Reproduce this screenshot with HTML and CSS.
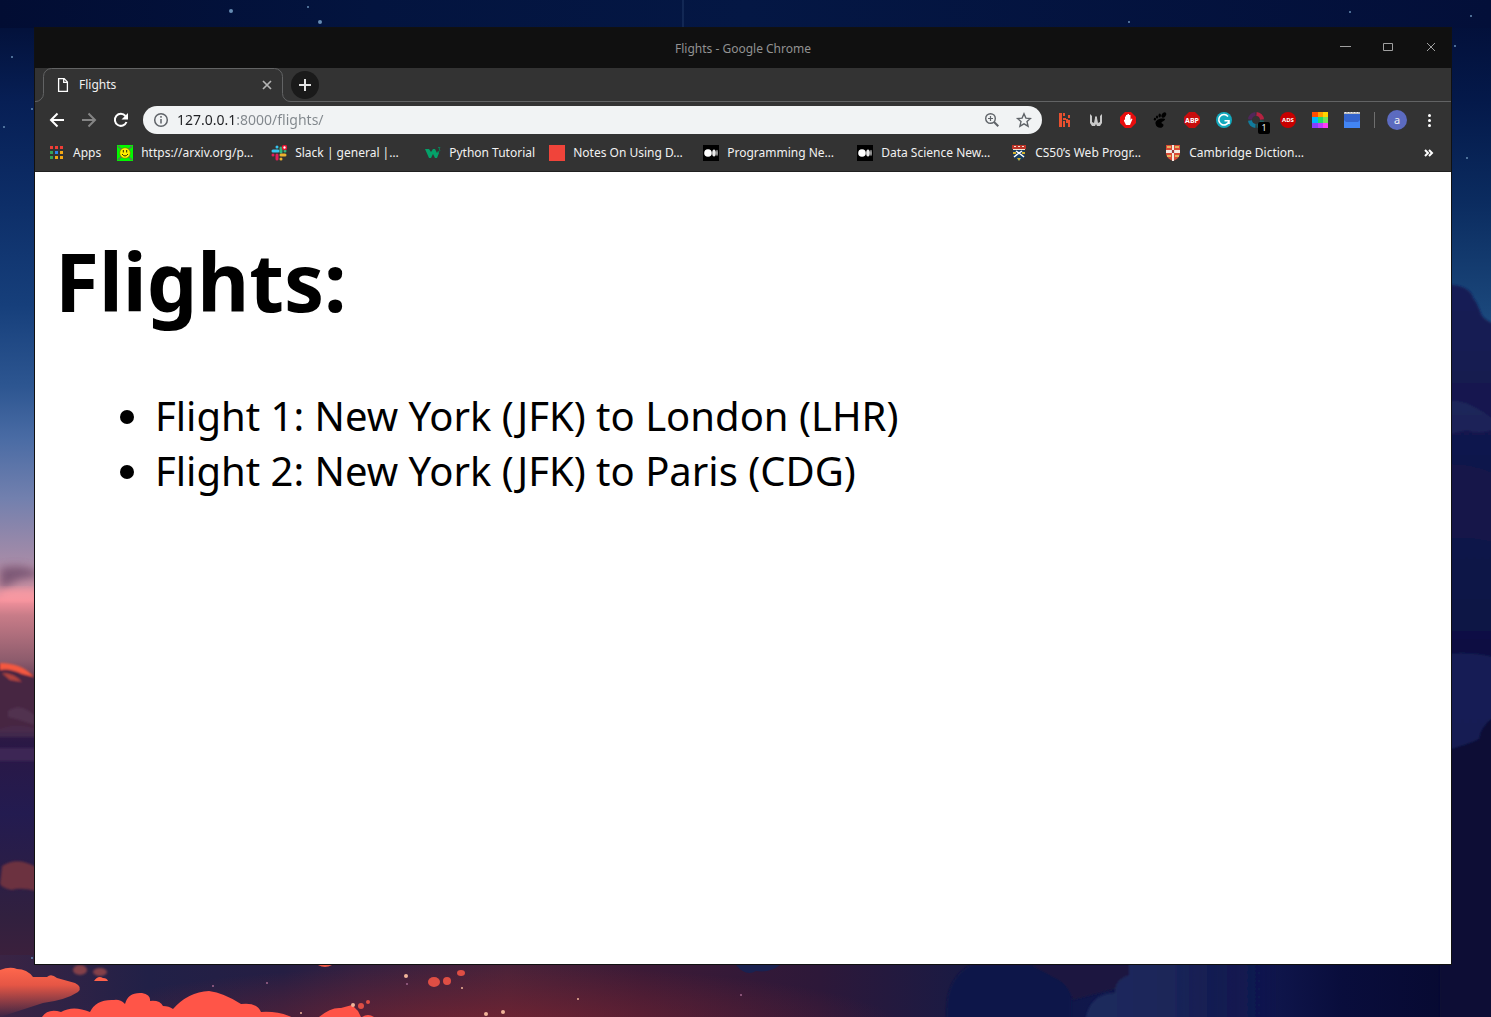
FILE: index.html
```
<!DOCTYPE html>
<html lang="en">
<head>
<meta charset="utf-8">
<title>Flights</title>
<link rel="stylesheet" href="styles.css">
</head>
<body>
<svg class="wallpaper" viewBox="0 0 1491 1017" preserveAspectRatio="none" aria-hidden="true">
  <defs>
    <linearGradient id="sky" x1="0" y1="0" x2="0" y2="1">
      <stop offset="0" stop-color="#020b30"/><stop offset=".03" stop-color="#03123c"/><stop offset=".1" stop-color="#071f55"/>
      <stop offset=".2" stop-color="#0d2e68"/><stop offset=".3" stop-color="#163f7b"/><stop offset=".38" stop-color="#2d5691"/>
      <stop offset=".43" stop-color="#496ba4"/><stop offset=".49" stop-color="#7280ae"/><stop offset=".55" stop-color="#a48ba8"/>
      <stop offset=".575" stop-color="#c58fa2"/><stop offset=".59" stop-color="#f5929d"/><stop offset=".605" stop-color="#c87c88"/><stop offset=".65" stop-color="#8c5b6c"/>
      <stop offset=".68" stop-color="#4d2b4a"/><stop offset=".73" stop-color="#2a1845"/><stop offset=".8" stop-color="#231b50"/>
      <stop offset=".9" stop-color="#31203f"/><stop offset="1" stop-color="#4a2038"/>
    </linearGradient>
    <linearGradient id="east" x1="0" y1="0" x2="0" y2="1">
      <stop offset="0" stop-color="#020d35"/><stop offset=".1" stop-color="#04194a"/><stop offset=".2" stop-color="#0b2c60"/>
      <stop offset=".32" stop-color="#1c4a7e"/><stop offset="1" stop-color="#07082e"/>
    </linearGradient>
    <linearGradient id="top" x1="0" y1="0" x2="1" y2="0">
      <stop offset="0" stop-color="#020d33"/><stop offset=".25" stop-color="#03143f"/><stop offset=".5" stop-color="#041744"/><stop offset="1" stop-color="#030f39"/>
    </linearGradient>
    <linearGradient id="ground" x1="0" y1="0" x2="1" y2="0">
      <stop offset="0" stop-color="#3a2444"/><stop offset=".1" stop-color="#212047"/><stop offset=".19" stop-color="#251e43"/><stop offset=".24" stop-color="#352040"/>
      <stop offset=".34" stop-color="#4a2239"/><stop offset=".43" stop-color="#3c1a36"/><stop offset=".55" stop-color="#2d1839"/>
      <stop offset=".64" stop-color="#1b1a43"/><stop offset=".72" stop-color="#10174a"/><stop offset=".84" stop-color="#111850"/>
      <stop offset=".9" stop-color="#090d3c"/><stop offset="1" stop-color="#06082d"/>
    </linearGradient>
    <radialGradient id="ember">
      <stop offset="0" stop-color="#7d242f" stop-opacity=".75"/><stop offset="1" stop-color="#7d242f" stop-opacity="0"/>
    </radialGradient>
    <linearGradient id="cloud" x1="0" y1="0" x2="0" y2="1">
      <stop offset="0" stop-color="#ff674d"/><stop offset=".35" stop-color="#e65645"/><stop offset="1" stop-color="#e65645" stop-opacity="0"/>
    </linearGradient>
    <linearGradient id="night" x1="0" y1="0" x2="0" y2="1">
      <stop offset="0" stop-color="#171d55"/><stop offset=".5" stop-color="#0a1143"/><stop offset="1" stop-color="#08103c"/>
    </linearGradient>
    <linearGradient id="ridge" x1="0" y1="0" x2="1" y2="0">
      <stop offset="0" stop-color="#1d2b5d"/><stop offset=".45" stop-color="#1a2559"/><stop offset="1" stop-color="#10164b" stop-opacity="0"/>
    </linearGradient>
    <filter id="soft" x="-20%" y="-60%" width="140%" height="220%"><feGaussianBlur stdDeviation="4"/></filter>
    <filter id="edge" x="-10%" y="-10%" width="120%" height="120%"><feGaussianBlur stdDeviation="1"/></filter>
  </defs>
  <rect width="750" height="1017" fill="url(#sky)"/>
  <rect x="745" width="746" height="1017" fill="url(#east)"/>
  <rect width="1491" height="28" fill="url(#top)"/>
  <rect y="955" width="1491" height="62" fill="url(#ground)"/>
  <ellipse cx="480" cy="1025" rx="420" ry="60" fill="url(#ember)"/>

  <g class="west">
    <path d="M0 568q22-5 38 4v5Q18 578 10 585L0 589z" fill="#6e4c6a" filter="url(#soft)" opacity=".8"/>
    <path d="M0 591h38v7H0z" fill="#ff9da4" filter="url(#soft)"/>
    <g filter="url(#edge)">
      <path d="M-9 664q27-2 53 18v50H-9z" fill="#472742"/>
      <path d="M0 663q22 0 34 14l-12-3Q10 668 0 670z" fill="#f4583f"/>
      <path d="M2 673q12 0 20 9l-12-2z" fill="#b0433d"/>
      <path d="M8 711q12-9 26 4v10q-10-4-26-8z" fill="#543453" opacity=".8"/>
      <path d="M-9 733q22-12 45-4v8H-9z" fill="#4a2c50" opacity=".7"/>
      <path d="M-9 748h53v13H-9z" fill="#3c2854"/>
      <path d="M2 866q15-10 34 1v24q-16-4-24-1-10-2-12-6z" fill="#6c3040"/>
    </g>
  </g>

  <g class="east" filter="url(#edge)">
    <path d="M1440 284q30 0 33 14 4 4 8 16 4 8 20 12v700h-61z" fill="url(#night)"/>
    <path d="M1440 402q26-8 61 24-20 10-34 4l-27 6z" fill="#20285d" opacity=".8"/>
    <path d="M1440 465q30-4 61 12v68q-28-10-61-5z" fill="#141848" opacity=".8"/>
    <path d="M1440 655q30-5 61 4v60q-16 20-24 24-14 4-37 10z" fill="#172257" opacity=".85"/>
    <path d="M1501 713q-20 10-22 26-12 6-39 13v275h61z" fill="#080a35"/>
  </g>

  <g class="south">
    <path d="M0 970q10-4 17-1 10 0 16 8h14q4-4 10 1l18 5q8 4 3 9-12 8-35 11l-43 14z" fill="url(#cloud)"/>
    <g fill="#84414a" filter="url(#edge)"><ellipse cx="80" cy="970" rx="7" ry="5"/><ellipse cx="100" cy="972" rx="7" ry="4"/></g>
    <path d="M94 981q4-6 9-3 4 0 5 3z" fill="#ff614b"/>
    <path d="M42 1017q6-9 19-5 12-7 29 0 6-13 24-12 6-1 11 4 3-12 17-11 9 2 8 8 10-1 13 5 6 0 10 3 15-17 36-18 15 2 32 13 16-2 20 8 15-1 28 4l12 5z" fill="#ff5548"/>
    <path d="M319 1017q12-10 22-9l11-3 6 6 3 6z" fill="#ff5347"/>
    <path d="M362 1017q6-4 12 0z" fill="#ff5347"/>
    <path d="M318 965h14q-7 4-14 0z" fill="#ef5948"/>
    <g fill="#df4e44"><ellipse cx="434" cy="982" rx="6" ry="5"/><circle cx="447" cy="981" r="4"/><ellipse cx="461" cy="973" rx="4" ry="3"/><circle cx="361" cy="1006" r="3"/><circle cx="368" cy="1002" r="2"/></g>
    <g fill="#f1b59a"><circle cx="353" cy="1005" r="2"/><circle cx="406" cy="976" r="2"/><circle cx="486" cy="1014" r="2"/><circle cx="503" cy="1012" r="2"/><circle cx="301" cy="1013" r="1"/><circle cx="462" cy="988" r="1"/><circle cx="578" cy="999" r="1"/></g>
    <g fill="#a0668c"><circle cx="213" cy="986" r="1"/><circle cx="267" cy="983" r="1"/><circle cx="407" cy="984" r="1"/><circle cx="741" cy="995" r="1"/></g>
    <path d="M736 965h44q-10 8-24 6-10 6-20-6z" fill="#1a2150"/>
    <g filter="url(#edge)">
      <path d="M947 1022q-4-43 24-57h100v57z" fill="#0e1548"/>
      <path d="M1031 965h98v20l-56 15q-4-14-14-20z" fill="#1c183f"/>
      <path d="M1085 1022q4-29 30-29 0-14 14-18v-15h150v62z" fill="url(#ridge)"/>
    </g>
  </g>

  <g class="stars" fill="#668cb3">
    <circle cx="231" cy="11" r="2"/><circle cx="308" cy="7" r="1"/><circle cx="320" cy="22" r="2"/><circle cx="1129" cy="22" r="1"/><circle cx="1350" cy="12" r="1"/><circle cx="1471" cy="16" r="1"/><circle cx="1455" cy="46" r="1"/><circle cx="1467" cy="158" r="1"/><circle cx="4" cy="127" r="1"/><circle cx="12" cy="57" r="1"/><circle cx="32" cy="109" r="1"/><circle cx="32" cy="958" r="1"/>
    <path d="M682 0h2v28h-2z" opacity=".15"/>
  </g>
</svg>

<div class="window">
  <header class="titlebar">
    <span class="titlebar-text">Flights - Google Chrome</span>
    <div class="window-controls">
      <button type="button" aria-label="Minimize"><svg width="12" height="12" viewBox="0 0 12 12"><path d="M1 5.500h11"/></svg></button>
      <button type="button" aria-label="Maximize"><svg width="12" height="12" viewBox="0 0 12 12"><path d="M1.500 2.500h9v7h-9z"/></svg></button>
      <button type="button" aria-label="Close window"><svg width="12" height="12" viewBox="0 0 12 12"><path d="M2 2l8 8M10 2l-8 8"/></svg></button>
    </div>
  </header>

  <div class="tabstrip">
    <div class="tab">
      <svg class="tab-shape" width="256" height="34" viewBox="0 0 256 34" aria-hidden="true"><path d="M0 33.500A8 8 0 0 0 8.500 25.500V8.500a8 8 0 0 1 8-8H239.500a8 8 0 0 1 8 8V25.500a8 8 0 0 0 8.500 8V34H0z" fill="#333"/><path d="M0 33.500A8 8 0 0 0 8.500 25.500V8.500a8 8 0 0 1 8-8H239.500a8 8 0 0 1 8 8V25.500a8 8 0 0 0 8.500 8" fill="none" stroke="#626364"/></svg>
      <svg class="tab-icon" width="16" height="16" viewBox="0 0 16 16" fill="none" stroke="#fff" stroke-width="1.300"><path d="M3.600 1.600h5.600l3.200 3.300v9.500H3.600zM8.700 1.800v3.600h3.500"/></svg>
      <span class="tab-title">Flights</span>
      <button class="tab-close" type="button" aria-label="Close tab"><svg width="16" height="16" viewBox="0 0 16 16" stroke="#b5b5b5" stroke-width="1.700"><path d="M4 4l8 8M12 4l-8 8"/></svg></button>
    </div>
    <button class="new-tab" type="button" aria-label="New tab"><svg width="16" height="16" viewBox="0 0 16 16" stroke="#e4e4e4" stroke-width="2"><path d="M8 2v12M2 8h12"/></svg></button>
  </div>

  <nav class="toolbar" aria-label="Browser toolbar">
    <button type="button" aria-label="Back"><svg width="16" height="16" viewBox="0 0 16 16" fill="none" stroke="#fff" stroke-width="2"><path d="M15 8H2.500M8.500 1.500L2 8l6.500 6.500"/></svg></button>
    <button type="button" aria-label="Forward"><svg width="16" height="16" viewBox="0 0 16 16" fill="none" stroke="#858585" stroke-width="2"><path d="M1 8h12.500M7.500 1.500L14 8l-6.500 6.500"/></svg></button>
    <button type="button" aria-label="Reload"><svg width="16" height="16" viewBox="0 0 16 16"><path d="M13.500 10A6 6 0 1 1 12.500 4" fill="none" stroke="#fff" stroke-width="2"/><path d="M15 1v6.500H8.500z" fill="#fff"/></svg></button>
    <div class="address">
      <svg width="16" height="16" viewBox="0 0 16 16" fill="none" stroke="#5f6368" stroke-width="1.500"><circle cx="8" cy="8" r="6.300"/><path d="M8 7v4.500M8 4v1.700"/></svg>
      <input type="text" value="127.0.0.1:8000/flights/" aria-label="Address" spellcheck="false">
      <button type="button" aria-label="Zoom"><svg width="16" height="16" viewBox="0 0 16 16" fill="none" stroke="#5f6368" stroke-width="1.400"><circle cx="6.500" cy="6.500" r="4.800"/><path d="M10 10l4.300 4.300" stroke-width="2"/><path d="M6.500 4v5M4 6.500h5" stroke-width="1.200"/></svg></button>
      <button type="button" aria-label="Bookmark this page"><svg width="16" height="16" viewBox="0 0 16 16" fill="none" stroke="#5f6368" stroke-width="1.400"><path d="M8 1.800l1.900 4.300 4.600.4-3.500 3.100 1.100 4.600L8 11.800l-4.100 2.400L5 9.600 1.500 6.500l4.600-.4z"/></svg></button>
    </div>
    <div class="extensions">
      <button type="button" aria-label="Highlighter"><svg width="16" height="16" viewBox="0 0 16 16" fill="#e9502f"><path d="M3 1h3v14H3zM7 1h2v3H7zM7 9h2v6H7zM7 6h3v2H7zM10 7h2v4h-2zM12 3h2v3h-2zM12 8h2v7h-2z"/></svg></button>
      <button type="button" aria-label="Wallabagger"><svg width="16" height="16" viewBox="0 0 16 16"><path d="M2 2l2 2v6l2 1 1-5V4l1 1 1-1v2l1 5 2-1V4l2-2v9l-2 3H9l-1-2-1 2H4l-2-3z" fill="#c9c9c9"/></svg></button>
      <button type="button" aria-label="Content blocker"><svg width="16" height="16" viewBox="0 0 16 16"><path d="M5 0h6l5 5v6l-5 5H5l-5-5V5z" fill="#e80d0d"/><path d="M5 8V4.500h1V3h1.500V2H9v1h1.500v5l1-1.500 1 .5-2.500 6H6L4 9V7.500z" fill="#fff"/></svg></button>
      <button type="button" aria-label="GNOME Shell integration"><svg width="16" height="16" viewBox="0 0 16 16" fill="#000"><ellipse cx="11.800" cy="3" rx="2" ry="3" transform="rotate(35 11.800 3)"/><ellipse cx="7.700" cy="3.500" rx="1.200" ry="1.900"/><ellipse cx="5" cy="5" rx="1.100" ry="1.600"/><ellipse cx="2.900" cy="7.200" rx="1.100" ry="1.400"/><path d="M13 7C9 5.500 3 8 3.500 11.500c.5 5.500 8 5.500 8 1.500 0-1.500-2-1-2-2.200C9.500 9.500 13.500 9 13 7z"/></svg></button>
      <button type="button" aria-label="Adblock Plus"><svg width="16" height="16" viewBox="0 0 16 16"><path d="M5 0h6l5 5v6l-5 5H5l-5-5V5z" fill="#c70d0d"/><text x="8" y="11" text-anchor="middle" class="badge-text">ABP</text></svg></button>
      <button type="button" aria-label="Grammarly"><svg width="16" height="16" viewBox="0 0 16 16"><circle cx="8" cy="8" r="8" fill="#13a9bd"/><path d="M12 4.500A5.200 5.200 0 1 0 13 9M8.500 8.700H13V12" fill="none" stroke="#fff" stroke-width="1.600"/></svg></button>
      <button class="counted" type="button" aria-label="Tracker monitor"><svg width="16" height="16" viewBox="0 0 16 16" fill="none" stroke-width="4"><path d="M2 7.500A6 6 0 0 1 7.500 2" stroke="#51275b"/><path d="M8.500 2A6 6 0 0 1 14 7.500" stroke="#b52241"/><path d="M14 8.500A6 6 0 0 1 8.500 14" stroke="#215c60"/><path d="M7.500 14A6 6 0 0 1 2 8.500" stroke="#117b9c"/></svg><span class="count">1</span></button>
      <button type="button" aria-label="Ads blocker"><svg width="16" height="16" viewBox="0 0 16 16"><circle cx="8" cy="8" r="8" fill="#c80000"/><text x="8" y="10" text-anchor="middle" class="badge-text badge-text--small">ADS</text></svg></button>
      <button type="button" aria-label="Color picker"><svg width="16" height="16" viewBox="0 0 16 16" shape-rendering="crispEdges"><path d="M0 0h6v5H0z" fill="#ff4c00"/><path d="M6 0h5v5H6z" fill="#ff9d00"/><path d="M11 0h5v5h-5z" fill="#ffd500"/><path d="M0 5h6v6H0z" fill="#00b6ff"/><path d="M6 5h5v6H6z" fill="#22db69"/><path d="M11 5h5v6h-5z" fill="#72e35a"/><path d="M0 11h6v5H0z" fill="#873dff"/><path d="M6 11h5v5H6z" fill="#bd3dff"/><path d="M11 11h5v5h-5z" fill="#ff3df5"/></svg></button>
      <button type="button" aria-label="Notes"><svg width="16" height="16" viewBox="0 0 16 16"><path d="M0 2h16v14H0z" fill="#4285f4"/><path d="M0 2h16v6l-2 2H2L0 8z" fill="#3464cc"/><path d="M0 0h16v2H0z" fill="#bdbdbd"/><path d="M1 0h1v1H1zM4 0h1v1H4zM7 0h1v1H7zM10 0h1v1h-1zM13 0h1v1h-1z" fill="#eee"/></svg></button>
    </div>
    <span class="divider"></span>
    <button class="profile" type="button" aria-label="Profile">a</button>
    <button class="menu" type="button" aria-label="Menu"><svg width="16" height="16" viewBox="0 0 16 16" fill="#fff"><circle cx="8.500" cy="3.500" r="1.500"/><circle cx="8.500" cy="8.500" r="1.500"/><circle cx="8.500" cy="13.500" r="1.500"/></svg></button>
  </nav>

  <nav class="bookmarks" aria-label="Bookmarks">
    <a class="bookmark apps" href="#"><svg width="16" height="16" viewBox="0 0 16 16" shape-rendering="crispEdges"><path d="M1 1h3v3H1zM6 1h3v3H6zM11 1h3v3h-3z" fill="#ef3e36"/><path d="M6 6h3v3H6z" fill="#2b83ed"/><path d="M11 6h3v3h-3zM6 11h3v3H6zM11 11h3v3h-3z" fill="#f4a814"/><path d="M1 6h3v3H1zM1 11h3v3H1z" fill="#35a456"/></svg><span>Apps</span></a>
    <a class="bookmark cut" href="#"><svg width="16" height="16" viewBox="0 0 16 16"><path fill="#00f900" d="M0 0h16v16H0z"/><path d="M1 1l4 4M15 1l-4 4M1 15l4-4M15 15l-4-4" stroke="#62705a" stroke-width="1.500"/><circle cx="8" cy="8" r="5.300" fill="#ffef00" stroke="#766c00" stroke-width=".6"/><path d="M6.300 5v2.500M9.700 5v2.500M5 9q3 4 6 0" fill="none" stroke="#292900"/></svg><span>https://arxiv.org/p…</span></a>
    <a class="bookmark cut" href="#"><svg width="16" height="16" viewBox="0 0 16 16" stroke-width="3" stroke-linecap="round"><path d="M6 2v.1M2 6h5" stroke="#36c5f0"/><path d="M10 3v4M14 6v.1" stroke="#2eb67d"/><path d="M2 10v.1M6 10v4" stroke="#e01e5a"/><path d="M10 10h4M10 14v.1" stroke="#ecb22e"/><circle cx="13.500" cy="2.500" r="2" fill="#fff" stroke="#e01530" stroke-width="1.600"/></svg><span>Slack | general |…</span></a>
    <a class="bookmark short" href="#"><svg width="16" height="16" viewBox="0 0 16 16"><path d="M0 4h4l2 3 2-3h2l2 4 1-2 1 2-2 5h-2L8 9l-2 4H4z" fill="#04a169"/><path d="M13 2.500h2l-1 1.500q2 1 0 2.500h-1" fill="none" stroke="#078055"/></svg><span>Python Tutorial</span></a>
    <a class="bookmark cut" href="#"><svg width="16" height="16" viewBox="0 0 16 16"><path fill="#f0443a" d="M0 0h16v16H0z"/></svg><span>Notes On Using D…</span></a>
    <a class="bookmark cut" href="#"><svg width="16" height="16" viewBox="0 0 16 16"><path d="M0 0h16v16H0z"/><circle cx="5" cy="8" r="3.800" fill="#fff"/><ellipse cx="11" cy="8" rx="1.800" ry="3.500" fill="#e8e8e8"/><ellipse cx="14" cy="8" rx=".8" ry="3.300" fill="#bbb"/></svg><span>Programming Ne…</span></a>
    <a class="bookmark cut" href="#"><svg width="16" height="16" viewBox="0 0 16 16"><path d="M0 0h16v16H0z"/><circle cx="5" cy="8" r="3.800" fill="#fff"/><ellipse cx="11" cy="8" rx="1.800" ry="3.500" fill="#e8e8e8"/><ellipse cx="14" cy="8" rx=".8" ry="3.300" fill="#bbb"/></svg><span>Data Science New…</span></a>
    <a class="bookmark cut" href="#"><svg width="16" height="16" viewBox="0 0 16 16"><path d="M2 5h12v5q0 3-6 6-6-3-6-6z" fill="#183e60"/><path d="M1 0h14v4H1z" fill="#bd3429"/><path d="M3 1h2v1H3zM7 1h2v1H7zM11 1h2v1h-2zM2 4h12v1H2z" fill="#f3e3d0"/><path d="M3 12l5-4 5 4M5 6l3 2 3-2" fill="none" stroke="#fff" stroke-width="1.500"/><path d="M2 7h3v2H2zM11 7h3v2h-3zM6 13h4l-2 3z" fill="#d4b12b"/></svg><span>CS50’s Web Progr…</span></a>
    <a class="bookmark cut" href="#"><svg width="16" height="16" viewBox="0 0 16 16"><path d="M1 0h14v9q-1 5-7 7-6-2-7-7z" fill="#d94935"/><path d="M7 0h2v5h6v3H9v8H7V8H1V5h6z" fill="#f5e9e0"/><path d="M2 2h4M10 2h4M2 11h4M10 11h4" stroke="#e4b35e" stroke-width="2"/><path d="M6 5h4v3H6z" fill="#dedbdc"/><path d="M7 5h2v3H7z" fill="#9d393a"/></svg><span>Cambridge Diction…</span></a>
    <button class="overflow" type="button" aria-label="More bookmarks"><svg width="16" height="16" viewBox="0 0 16 16" fill="none" stroke="#fff" stroke-width="2"><path d="M5 5l3 3-3 3M9 5l3 3-3 3"/></svg></button>
  </nav>

  <main class="page">
    <h1>Flights:</h1>
    <ul>
      <li>Flight 1: New York (JFK) to London (LHR)</li>
      <li>Flight 2: New York (JFK) to Paris (CDG)</li>
    </ul>
  </main>
</div>
</body>
</html>
```
FILE: styles.css
```
* { box-sizing: border-box; }

body {
  margin: 0;
  min-height: 100vh;
  display: flex;
  padding: 27px 39px 52px 34px;
  background: #07103a;
  font-family: "Noto Sans", sans-serif;
  font-size: 12px;
}

.wallpaper {
  position: fixed;
  inset: 0;
  z-index: -1;
  width: 100%;
  height: 100%;
}

svg { display: block; flex: none; }

button {
  display: grid;
  place-items: center;
  flex: none;
  margin: 0;
  padding: 0;
  border: 0;
  background: none;
  color: inherit;
  font: inherit;
}

.window {
  flex: 1;
  min-width: 0;
  display: flex;
  flex-direction: column;
  border: 1px solid #111;
  background: #333;
  color: #f1f1f1;
}

.titlebar {
  display: grid;
  grid-template-columns: 1fr auto 1fr;
  align-items: center;
  height: 40px;
  background: #101010;
  color: #929292;
}

.titlebar-text { grid-column: 2; }

.window-controls {
  display: flex;
  justify-self: end;
  gap: 31px;
  padding: 0 14px 2px 0;
}

.window-controls svg { fill: none; stroke: #a0a0a0; }

.tabstrip {
  display: flex;
  align-items: center;
  height: 34px;
  border-bottom: 1px solid #626364;
}

.tab {
  position: relative;
  display: flex;
  align-items: center;
  gap: 8px;
  width: 256px;
  height: 33px;
  padding: 0 16px 0 20px;
}

.tab-shape { position: absolute; left: 0; top: 0; }
.tab-icon, .tab-title, .tab-close { z-index: 1; }
.tab-title { flex: 1; }

.new-tab {
  width: 28px;
  height: 28px;
  border-radius: 50%;
  background: #1a1a1a;
}

.toolbar {
  display: flex;
  align-items: center;
  gap: 16px;
  height: 36px;
  padding: 0 14px;
}

.address {
  flex: 1;
  display: flex;
  align-items: center;
  height: 28px;
  gap: 16px;
  margin-left: -2px;
  padding: 0 10px;
  border-radius: 14px;
  background: #f1f3f4;
}

.address input {
  flex: 1;
  min-width: 0;
  margin-left: -8px;
  padding: 0;
  border: 0;
  outline: 0;
  font: 14px/20px "Noto Sans", sans-serif;
  color: transparent;
  background: linear-gradient(90deg, #202124 60px, #80868b 60px);
  background-clip: text;
  -webkit-background-clip: text;
}

.extensions { display: flex; gap: 16px; margin-left: -2px; }

.badge-text {
  fill: #fff;
  font: bold 7px "Noto Sans", sans-serif;
}

.badge-text--small { font-size: 6px; }

.counted { position: relative; }

.count {
  position: absolute;
  left: 10px;
  top: 10px;
  width: 12px;
  height: 12px;
  border-radius: 2px;
  background: #000;
  font-size: 9px;
  line-height: 12px;
}

.divider {
  width: 1px;
  height: 16px;
  margin: 0 -4px 0 -2px;
  background: #6e6e6e;
}

.profile {
  width: 20px;
  height: 20px;
  border-radius: 50%;
  background: #5c6bc0;
  font-size: 11px;
  line-height: 20px;
}

.menu { margin-left: -2px; }

.bookmarks {
  display: flex;
  align-items: center;
  gap: 16px;
  height: 34px;
  padding: 0 15px 4px 14px;
  border-bottom: 1px solid #202020;
}

.bookmark {
  display: flex;
  align-items: center;
  gap: 8px;
  color: inherit;
  text-decoration: none;
  white-space: nowrap;
}

.cut { width: 138px; }
.short { width: 108px; }
.overflow { margin-left: auto; }

.page {
  flex: 1;
  padding: 54px 20px 20px;
  background: #fff;
  color: #000;
  font-size: 40px;
  line-height: 55px;
}

.page h1 {
  margin: 0 0 53px;
  font-size: 80px;
  line-height: 109px;
}

.page ul { margin: 0; padding-left: 100px; }
```
